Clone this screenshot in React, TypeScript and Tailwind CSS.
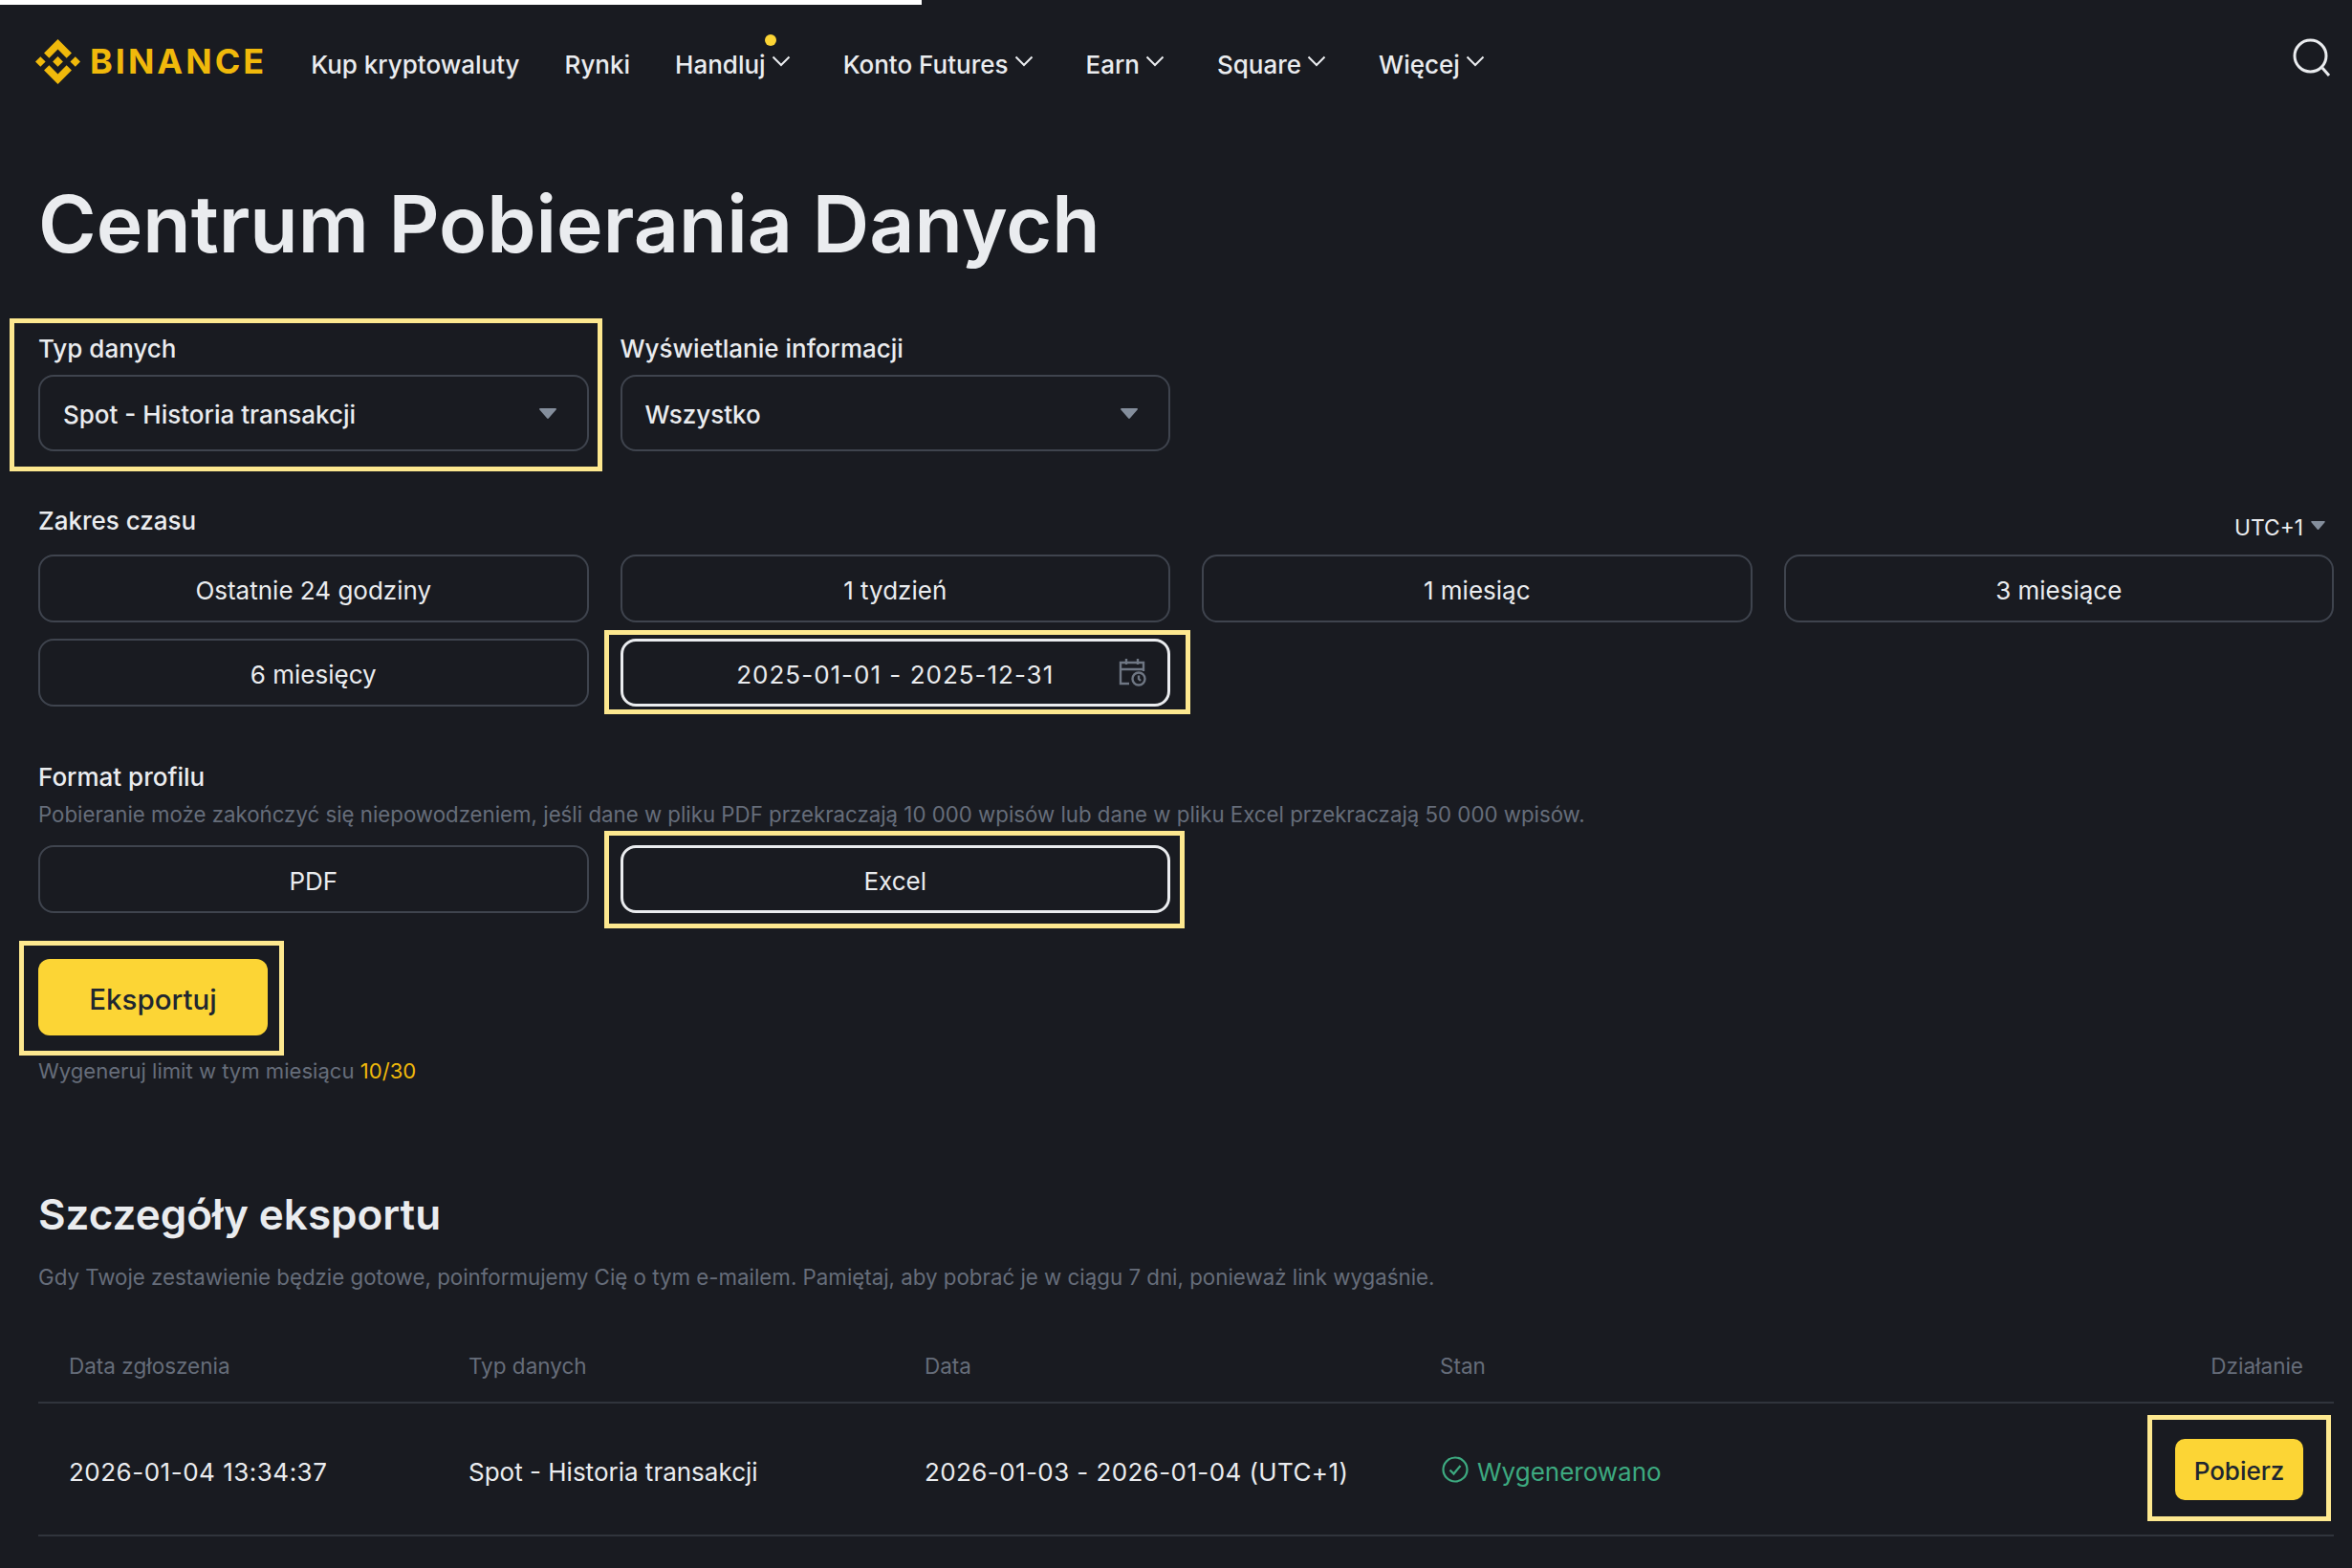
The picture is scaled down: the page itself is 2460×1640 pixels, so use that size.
import type { ReactNode } from "react"

function Logo() {
  return (
    <div className="flex items-center gap-[10px]">
      <svg viewBox="0 0 126.61 126.61" className="w-[47px] h-[47px]" fill="#F0B90B">
        <path d="m38.73 53.2 24.59-24.58 24.6 24.6 14.3-14.31L63.32 0 24.42 38.9zM0 63.31l14.3-14.31 14.31 14.31-14.31 14.3zM38.73 73.41l24.59 24.59 24.6-24.6 14.31 14.29-38.9 38.91-38.91-38.88-.02-.02zM98.28 63.33l14.3-14.31 14.31 14.3-14.31 14.32z" />
        <path d="m77.83 63.3-14.51-14.52-10.73 10.73-1.24 1.23-2.54 2.54 14.51 14.5 14.51-14.47z" />
      </svg>
      <span className="text-[36px] leading-none font-bold text-[#F0B90B] tracking-[3px]">BINANCE</span>
    </div>
  )
}

function Chevron() {
  return (
    <svg viewBox="0 0 20 12" className="w-[20px] h-[12px] -translate-y-[3px]" fill="none" stroke="#EAECEF" strokeWidth="2">
      <path d="M1.5 1.5 10 10l8.5-8.5" />
    </svg>
  )
}

function NavItem({ label, menu, dot }: { label: string; menu?: boolean; dot?: boolean }) {
  return (
    <div className={`relative flex items-center gap-[6px] ${menu ? "mr-[8px]" : ""}`}>
      <span className="pt-[2px] text-[26px] leading-[34px] font-medium text-[#EAECEF]">{label}</span>
      {menu && <Chevron />}
      {dot && <span className="absolute left-[94px] -top-[13px] w-[12px] h-[12px] rounded-full bg-[#FCD535]" />}
    </div>
  )
}

function Marked({ box, children }: { box: string; children: ReactNode }) {
  return (
    <div className="relative">
      {children}
      <span className={`absolute border-[5px] border-[#FDE88F] pointer-events-none ${box}`} />
    </div>
  )
}

function Triangle() {
  return (
    <svg viewBox="0 0 18 11" className="w-[18px] h-[11px]" fill="#848E9C">
      <path d="M1 0h16c.8 0 1.2.9.7 1.5L9.8 10.6c-.4.5-1.2.5-1.6 0L.3 1.5C-.2.9.2 0 1 0z" />
    </svg>
  )
}

function Select({ value }: { value: string }) {
  return (
    <div className="h-[80px] rounded-[16px] border-2 border-[#3F444E] flex items-center justify-between pl-[24px] pr-[32px]">
      <span className="pt-[3px] text-[26px] font-medium text-[#EAECEF]">{value}</span>
      <Triangle />
    </div>
  )
}

function Option({ label, active, children, wide }: { label: string; active?: boolean; children?: ReactNode; wide?: boolean }) {
  return (
    <div
      className={`relative h-[71px] pt-[3px] rounded-[16px] flex items-center justify-center text-[26px] text-[#EAECEF] ${
        active ? "border-[3px] border-[#EAECEF]" : "border-2 border-[#3F444E]"
      } ${wide ? "tracking-[1px]" : ""}`}
    >
      {label}
      {children}
    </div>
  )
}

function Label({ children }: { children: ReactNode }) {
  return <div className="text-[26px] leading-[30px] font-medium text-[#EAECEF]">{children}</div>
}

export default function App() {
  return (
    <div className="w-[2460px] h-[1640px] overflow-hidden bg-[#191B21] font-['Inter',sans-serif]">
      <div className="h-[5px] w-[964px] bg-white" />

      <nav className="h-[124px] flex items-center justify-between pl-[37px] pr-[22px]">
        <div className="flex items-center gap-[47px]">
          <div className="-mr-[1px] -translate-y-[3px]">
            <Logo />
          </div>
          <NavItem label="Kup kryptowaluty" />
          <NavItem label="Rynki" />
          <NavItem label="Handluj" menu dot />
          <NavItem label="Konto Futures" menu />
          <NavItem label="Earn" menu />
          <NavItem label="Square" menu />
          <NavItem label="Więcej" menu />
        </div>
        <svg viewBox="0 0 40 40" className="w-[40px] h-[40px] -translate-y-[7px]" fill="none" stroke="#EAECEF" strokeWidth="3">
          <circle cx="18.5" cy="18.5" r="16.5" />
          <path d="m31 31 7 8" />
        </svg>
      </nav>

      <main className="w-[2460px] pl-[40px] pr-[19px]">
        <h1 className="mt-[55px] text-[82.3px] leading-[100px] font-semibold text-[#EAECEF]">Centrum Pobierania Danych</h1>

        <div className="mt-[66px] grid grid-cols-4 gap-x-[33px]">
          <Marked box="-left-[30px] -right-[14px] -top-[17px] -bottom-[21px]">
            <Label>Typ danych</Label>
            <div className="mt-[12px]">
              <Select value="Spot - Historia transakcji" />
            </div>
          </Marked>
          <div>
            <Label>Wyświetlanie informacji</Label>
            <div className="mt-[12px]">
              <Select value="Wszystko" />
            </div>
          </div>
        </div>

        <div className="mt-[58px] flex items-end justify-between">
          <Label>Zakres czasu</Label>
          <div className="flex items-center gap-[8px] pr-[9px] -mb-[7px]">
            <span className="text-[22.8px] leading-[30px] text-[#EAECEF]">UTC+1</span>
            <svg viewBox="0 0 18 11" className="w-[15px] h-[9px] -translate-y-[3px]" fill="#848E9C">
              <path d="M1 0h16c.8 0 1.2.9.7 1.5L9.8 10.6c-.4.5-1.2.5-1.6 0L.3 1.5C-.2.9.2 0 1 0z" />
            </svg>
          </div>
        </div>
        <div className="mt-[20px] grid grid-cols-4 gap-x-[33px] gap-y-[17px]">
          <Option label="Ostatnie 24 godziny" />
          <Option label="1 tydzień" />
          <Option label="1 miesiąc" />
          <Option label="3 miesiące" />
          <Option label="6 miesięcy" />
          <Marked box="-left-[17px] -right-[21px] -top-[9px] -bottom-[8px]">
            <Option label="2025-01-01 - 2025-12-31" active wide>
              <svg viewBox="0 0 30 30" className="absolute right-[22px] top-[17px] w-[30px] h-[30px]" fill="none" stroke="#6E7683" strokeWidth="2.4">
                <path d="M12 27H3V5h24v9M3 12h24M9 1v6M21 1v6" />
                <circle cx="22" cy="22" r="6.5" />
                <path d="M22 18.5V22l2 2" />
              </svg>
            </Option>
          </Marked>
        </div>

        <div className="mt-[59px]">
          <Label>Format profilu</Label>
        </div>
        <p className="mt-[9px] text-[22.25px] leading-[30px] text-[#666D7A]">
          Pobieranie może zakończyć się niepowodzeniem, jeśli dane w pliku PDF przekraczają 10 000 wpisów lub dane w pliku Excel przekraczają 50 000 wpisów.
        </p>
        <div className="mt-[17px] grid grid-cols-4 gap-x-[33px]">
          <Option label="PDF" />
          <Marked box="-left-[17px] -right-[15px] -top-[15px] -bottom-[16px]">
            <Option label="Excel" active />
          </Marked>
        </div>

        <div className="mt-[48px] w-[240px]">
          <Marked box="-left-[20px] -right-[17px] -top-[19px] -bottom-[21px]">
            <button className="w-[240px] h-[80px] pt-[5px] rounded-[12px] bg-[#FCD535] text-[29.5px] font-medium text-[#202630]">Eksportuj</button>
          </Marked>
        </div>
        <p className="mt-[22px] text-[22.1px] leading-[30px] text-[#666D7A]">
          Wygeneruj limit w tym miesiącu <span className="text-[#F0B90B]">10/30</span>
        </p>

        <h2 className="mt-[107px] text-[44px] leading-[56px] font-semibold text-[#EAECEF]">Szczegóły eksportu</h2>
        <p className="mt-[23px] text-[22.3px] leading-[30px] text-[#666D7A]">
          Gdy Twoje zestawienie będzie gotowe, poinformujemy Cię o tym e-mailem. Pamiętaj, aby pobrać je w ciągu 7 dni, ponieważ link wygaśnie.
        </p>

        <div className="mt-[41px] h-[76px] pb-[1px] grid grid-cols-[418px_477px_539px_1fr_auto] items-center px-[32px] border-b-2 border-[#30343C] text-[22.5px] text-[#666D7A]">
          <div>Data zgłoszenia</div>
          <div>Typ danych</div>
          <div>Data</div>
          <div>Stan</div>
          <div>Działanie</div>
        </div>
        <div className="h-[139px] grid grid-cols-[418px_477px_539px_1fr_auto] items-center px-[32px] border-b-2 border-[#30343C] text-[26px] text-[#EAECEF]">
          <div className="pt-[6px] tracking-[0.5px]">2026-01-04 13:34:37</div>
          <div className="pt-[6px]">Spot - Historia transakcji</div>
          <div className="pt-[6px] tracking-[0.4px]">2026-01-03 - 2026-01-04 (UTC+1)</div>
          <div className="flex items-center gap-[11px] text-[#3DAA80]">
            <svg viewBox="0 0 28 28" className="w-[28px] h-[28px] translate-x-[2px]" fill="none" stroke="#3DAA80" strokeWidth="2.2">
              <circle cx="14" cy="14" r="12.5" />
              <path d="m8.5 14.5 4 4 7-8.5" />
            </svg>
            <span className="pt-[6px]">Wygenerowano</span>
          </div>
          <Marked box="-left-[29px] -right-[29px] -top-[25px] -bottom-[22px]">
            <button className="block w-[134px] h-[64px] pt-[3px] rounded-[10px] bg-[#FCD535] text-[26px] font-medium text-[#202630]">Pobierz</button>
          </Marked>
        </div>
      </main>
    </div>
  )
}
